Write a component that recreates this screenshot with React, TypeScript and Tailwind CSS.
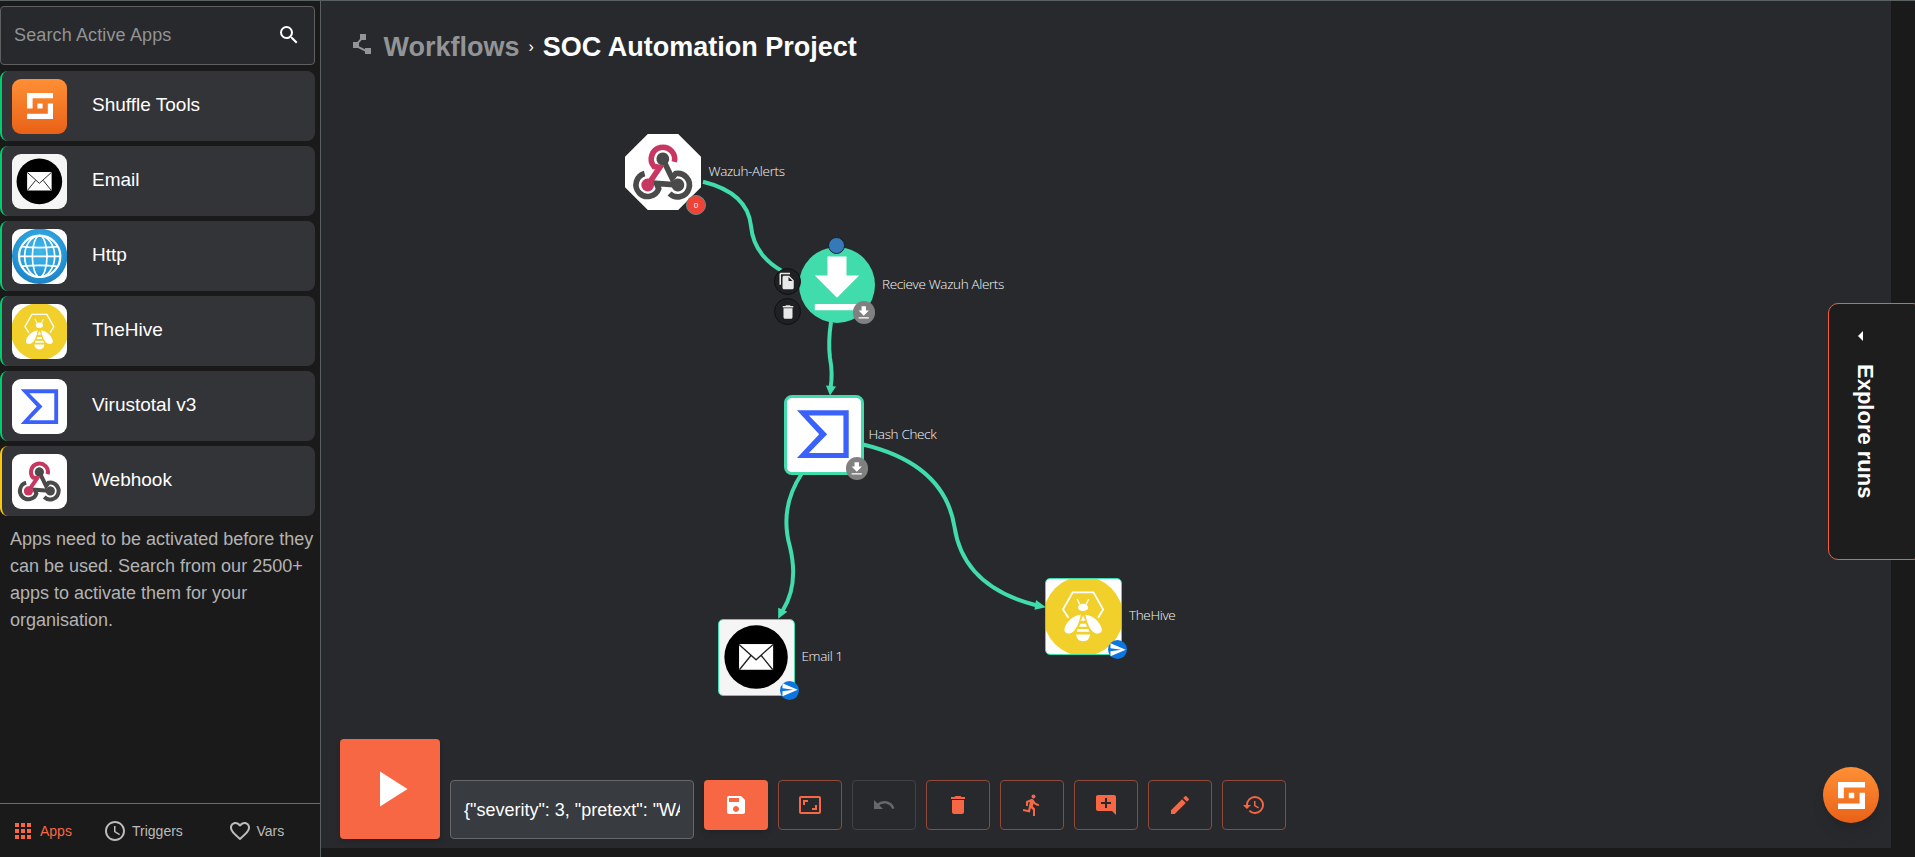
import type { ReactNode } from 'react';
import {
  MdAccessTime,
  MdAddComment,
  MdApps,
  MdArrowLeft,
  MdAspectRatio,
  MdDelete,
  MdDirectionsRun,
  MdEdit,
  MdFavoriteBorder,
  MdFileCopy,
  MdGetApp,
  MdHistory,
  MdPlayArrow,
  MdPolyline,
  MdSave,
  MdSearch,
  MdSend,
  MdUndo,
} from 'react-icons/md';

function ShuffleMark({ className }: { className?: string }) {
  return (
    <svg viewBox="0 0 5 5" className={className} fill="#fff" shapeRendering="geometricPrecision">
      <path d="M0 0H5V1H1.08V3H0zM2 2H3V3H2zM4 2H5V5H0V4H4z" />
    </svg>
  );
}

function ShuffleLogo() {
  return (
    <div className="flex size-full items-center justify-center bg-linear-to-b from-[#ff8f35] to-[#e96116]">
      <ShuffleMark className="size-[26px]" />
    </div>
  );
}

function EmailLogo() {
  return (
    <svg viewBox="0 0 229 229" className="size-full">
      <rect width="229" height="229" fill="#f5f5f5" />
      <circle cx="114" cy="114" r="95" fill="#000" />
      <rect x="63" y="75" width="102" height="77" fill="#fff" />
      <path d="M63 76l51 46 51-46M64 152l34-42M164 152l-34-42" fill="none" stroke="#222" strokeWidth="4" />
    </svg>
  );
}

function HttpLogo() {
  return (
    <svg viewBox="0 0 165 165" className="size-full">
      <defs>
        <radialGradient id="globe" cx="50%" cy="40%" r="60%">
          <stop offset="0" stopColor="#3fb8ea" />
          <stop offset="0.6" stopColor="#2ca0dc" />
          <stop offset="1" stopColor="#1c80c2" />
        </radialGradient>
      </defs>
      <rect width="165" height="165" fill="#fff" />
      <circle cx="83" cy="82" r="83" fill="url(#globe)" />
      <g fill="none" stroke="#fff" strokeWidth="5">
        <circle cx="83" cy="82" r="62" strokeWidth="6.500" />
        <ellipse cx="83" cy="82" rx="22" ry="62" />
        <ellipse cx="83" cy="82" rx="45" ry="62" />
        <path d="M21 82H145M29 53Q83 59 137 53M29 112Q83 106 137 112" />
      </g>
    </svg>
  );
}

function HiveLogo() {
  return (
    <svg viewBox="0 0 229 229" className="size-full">
      <rect width="229" height="229" fill="#fff" />
      <circle cx="114.500" cy="114.500" r="119" fill="#f1d02c" />
      <g fill="none" stroke="#fff" strokeWidth="5.500">
        <path d="M70 119L54 94 83 43H145L174 94 159 119" />
        <path d="M96 63l8 16M131 63l-8 16" strokeWidth="4" />
      </g>
      <g fill="#fff">
        <ellipse cx="114" cy="88" rx="15" ry="11" />
        <path d="M107 110C84 112 62 132 58 153C57 163 65 168 74 166C90 163 102 138 107 110z" />
        <path d="M121 110C144 112 166 132 170 153C171 163 163 168 154 166C138 163 126 138 121 110z" />
        <path d="M114 112l7 16H107zM106 137H122L126 146H102zM98 153H130L133 161H95zM93 169H135Q133 189 114 189Q95 189 93 169z" />
      </g>
    </svg>
  );
}

function VirusTotalLogo() {
  return (
    <svg viewBox="0 0 229 229" className="size-full">
      <rect width="229" height="229" fill="#fff" />
      <path
        fillRule="evenodd"
        fill="#3b61fb"
        d="M36 43H192V187H36L103 115zM72 59L127 115 72 172H176V59z"
      />
    </svg>
  );
}

function WebhookLogo() {
  const arm = (
    <>
      <path d="M49.300 27.900A11.700 11.700 0 1 0 29 32.500L34.800 33.300 23.500 50" fill="none" strokeWidth="5.600" />
      <circle cx="22.700" cy="51" r="6.400" stroke="none" />
    </>
  );
  return (
    <svg viewBox="0 0 76 76" className="size-full">
      <rect width="76" height="76" fill="#fff" />
      <g stroke="#4a4a4a" fill="#4a4a4a">
        <g transform="rotate(-120 37.800 42.300)">{arm}</g>
        <g transform="rotate(120 37.800 42.300)">{arm}</g>
      </g>
      <g stroke="#c83762" fill="#c83762">{arm}</g>
    </svg>
  );
}

const apps: { name: string; logo: ReactNode; trigger?: boolean }[] = [
  { name: 'Shuffle Tools', logo: <ShuffleLogo /> },
  { name: 'Email', logo: <EmailLogo /> },
  { name: 'Http', logo: <HttpLogo /> },
  { name: 'TheHive', logo: <HiveLogo /> },
  { name: 'Virustotal v3', logo: <VirusTotalLogo /> },
  { name: 'Webhook', logo: <WebhookLogo />, trigger: true },
];

function Sidebar() {
  return (
    <aside className="flex w-[321px] shrink-0 flex-col border-r border-[#5a5f62] pt-[5px]">
      <div className="flex h-[59px] w-[315px] items-center justify-between rounded-[4px] border border-[#5e5f61] bg-[#27292d] pr-[13px] pl-[13px]">
        <span className="text-[18px] tracking-[0.13px] text-[#929394]">Search Active Apps</span>
        <MdSearch className="mb-[2px] size-6 text-white" />
      </div>
      <div className="mt-[6px] flex w-[315px] flex-col gap-[5px]">
        {apps.map((app) => (
          <div
            key={app.name}
            className={`flex h-[70px] items-center rounded-[8px] border-l-2 bg-[#333438] pl-[10px] ${
              app.trigger ? 'border-[#fdc70c]' : 'border-[#02cb70]'
            }`}
          >
            <div className="size-[55px] overflow-hidden rounded-[9px]">{app.logo}</div>
            <span className="ml-[25px] pb-[2px] text-[19px] text-white">{app.name}</span>
          </div>
        ))}
      </div>
      <p className="mt-[10px] ml-[10px] w-[309px] text-[18px] leading-[27px] text-[#b3b3b3]">
        Apps need to be activated before they can be used. Search from our 2500+ apps to activate them for your
        organisation.
      </p>
      <div className="mt-auto flex h-[54px] items-center border-t border-[#6b6c6e] pl-[11px] text-sm text-[#bcbcbc]">
        <div className="flex w-[92px] items-center gap-[5px] text-[#f86743]">
          <MdApps className="size-6" />
          Apps
        </div>
        <div className="flex w-[124.500px] items-center gap-[5px]">
          <MdAccessTime className="size-6" />
          Triggers
        </div>
        <div className="flex items-center gap-[5px]">
          <MdFavoriteBorder className="size-6" />
          Vars
        </div>
      </div>
    </aside>
  );
}

function NodeLabel({ className, children }: { className: string; children: ReactNode }) {
  return (
    <span
      className={`absolute text-[13.5px] leading-[20px] font-light tracking-[-0.35px] whitespace-nowrap text-[#f6f6f6] [font-family:'Open_Sans','Noto_Sans',sans-serif] ${className}`}
    >
      {children}
    </span>
  );
}

function RoundBadge({ className, children }: { className: string; children?: ReactNode }) {
  return <div className={`absolute flex items-center justify-center rounded-full ${className}`}>{children}</div>;
}

function Graph() {
  return (
    <div className="absolute top-0 left-0 h-[720px] w-[1220px]">
      <svg viewBox="321 1 1220 720" className="absolute inset-0 size-full" fill="none">
        <g stroke="#41dcab" strokeWidth="4">
          <path d="M703 181.700Q747.700 192.700 751 226Q753.700 255 782 271" />
          <path d="M831 322Q828 342 830 358Q833 374 830.500 388" />
          <path d="M863 444.500Q944.500 464 954.500 527Q963.500 587 1037 605.500" />
          <path d="M801.500 474Q779 508 790 547Q799 585 782.500 611" />
        </g>
        <g fill="#41dcab">
          <path d="M825.900 385.500L836 386.500 830 395.500z" />
          <path d="M1036 600L1046 607.300 1034.500 609.700z" />
          <path d="M778.200 607.700L787.300 611.700 778.200 618.700z" />
        </g>
      </svg>

      <div className="absolute top-[133px] left-[304px] size-[76px] [clip-path:polygon(30%_0,70%_0,100%_30%,100%_70%,70%_100%,30%_100%,0_70%,0_30%)]">
        <WebhookLogo />
      </div>
      <RoundBadge className="top-[194px] left-[365px] size-[20px] border border-[#6d8a86] bg-[#ef4337] text-[8px] text-white [font-family:'Open_Sans',sans-serif]">
        0
      </RoundBadge>
      <NodeLabel className="top-[160px] left-[387.500px]">Wazuh-Alerts</NodeLabel>

      <RoundBadge className="top-[246px] left-[477.500px] size-[76px] bg-[#41dcab]">
        <MdGetApp className="size-[76px] text-white" />
      </RoundBadge>
      <RoundBadge className="top-[236px] left-[507px] size-[17px] border border-[#14202c] bg-[#3579b9]" />
      <RoundBadge className="top-[266.500px] left-[452.500px] size-[27px] border border-[#0e0f10] bg-[#1f2023]">
        <MdFileCopy className="size-[18px] text-[#e8e8e8]" />
      </RoundBadge>
      <RoundBadge className="top-[297px] left-[453px] size-[27px] border border-[#0e0f10] bg-[#1f2023]">
        <MdDelete className="size-[18px] text-[#e8e8e8]" />
      </RoundBadge>
      <RoundBadge className="top-[300px] left-[531.500px] size-[22.500px] bg-[#808080]">
        <MdGetApp className="size-[17.500px] text-white" />
      </RoundBadge>
      <NodeLabel className="top-[273px] left-[561px]">Recieve Wazuh Alerts</NodeLabel>

      <div className="absolute top-[394px] left-[463px] size-[79.500px] overflow-hidden rounded-[8px] border-[3.500px] border-[#41dcab] bg-white">
        <div className="-m-[2px] size-[76px]">
          <VirusTotalLogo />
        </div>
      </div>
      <RoundBadge className="top-[456px] left-[524.500px] size-[22.500px] bg-[#808080]">
        <MdGetApp className="size-[17.500px] text-white" />
      </RoundBadge>
      <NodeLabel className="top-[423px] left-[547.500px]">Hash Check</NodeLabel>

      <div className="absolute top-[618px] left-[397px] size-[76.500px] overflow-hidden rounded-[5px] border border-[#41dcab]">
        <div className="-m-px size-[76.500px]">
          <EmailLogo />
        </div>
      </div>
      <RoundBadge className="top-[679.500px] left-[459px] size-[19px] bg-[#0b76e0]">
        <MdSend className="size-[17.500px] text-white" />
      </RoundBadge>
      <NodeLabel className="top-[645px] left-[480.500px]">Email 1</NodeLabel>

      <div className="absolute top-[577px] left-[724.300px] size-[76.500px] overflow-hidden rounded-[5px] border border-[#41dcab]">
        <div className="-m-px size-[76.500px]">
          <HiveLogo />
        </div>
      </div>
      <RoundBadge className="top-[639px] left-[787px] size-[19px] bg-[#0b76e0]">
        <MdSend className="size-[17.500px] text-white" />
      </RoundBadge>
      <NodeLabel className="top-[604px] left-[808px]">TheHive</NodeLabel>
    </div>
  );
}

const tools: { icon: typeof MdEdit; disabled?: boolean }[] = [
  { icon: MdAspectRatio },
  { icon: MdUndo, disabled: true },
  { icon: MdDelete },
  { icon: MdDirectionsRun },
  { icon: MdAddComment },
  { icon: MdEdit },
  { icon: MdHistory },
];

function Toolbar() {
  return (
    <div className="relative flex h-[100px] items-start gap-[10px]">
      <button className="flex size-[100px] items-center justify-center rounded-[4px] bg-[#f86743] shadow-md">
        <MdPlayArrow className="size-[60px] text-white" />
      </button>
      <input
        readOnly
        value={'{"severity": 3, "pretext": "WAZUH Alert"}'}
        className="mt-[41px] h-[59px] w-[244px] rounded-[4px] border border-[#66686b] bg-[#383b40] px-[13px] pt-[2px] text-[18px] text-white outline-none"
      />
      <button className="mt-[41px] flex h-[50px] w-[64px] items-center justify-center rounded-[4px] bg-[#f86743] shadow-md">
        <MdSave className="size-6 text-white" />
      </button>
      {tools.map(({ icon: Icon, disabled }, i) => (
        <button
          key={i}
          className={`mt-[41px] flex h-[50px] w-[64px] items-center justify-center rounded-[4px] border ${
            disabled ? 'border-[#404246] text-[#67686b]' : 'border-[#904838] text-[#f86743]'
          }`}
        >
          <Icon className="size-6" />
        </button>
      ))}
    </div>
  );
}

export default function App() {
  return (
    <div className="relative flex h-[857px] w-[1915px] overflow-hidden border-t border-[#5a6163] bg-[#1a1a1a] [font-family:'Liberation_Sans',Arial,sans-serif]">
      <Sidebar />
      <main className="flex h-[847px] w-[1570px] flex-col justify-between bg-[#27292d] pb-[9px] pl-[19px]">
        <header className="relative z-10 flex items-center pt-[31px] pl-[10px] text-[27px] leading-[30px] font-bold">
          <MdPolyline className="mb-[6px] size-6 text-[#939496]" />
          <span className="ml-[9.500px] text-[#939496]">Workflows</span>
          <span className="mx-[9px] text-base font-normal text-white">›</span>
          <span className="text-white">SOC Automation Project</span>
        </header>
        <Toolbar />
      </main>
      <div className="absolute top-0 left-[321px]">
        <Graph />
      </div>
      <div className="absolute top-[302px] left-[1828px] flex h-[257px] w-[95px] flex-col items-start rounded-[10px] border border-[#f85a3e] bg-[#1d1d1d] pt-[20px] pl-[20px] text-white">
        <MdArrowLeft className="size-6" />
        <span className="mt-[16px] ml-[2px] text-[22px] leading-[28px] font-bold whitespace-nowrap [writing-mode:vertical-rl]">
          Explore runs
        </span>
      </div>
      <button className="absolute top-[766px] left-[1823px] flex size-[56px] items-center justify-center rounded-full bg-linear-to-b from-[#ff8f35] to-[#e96116] shadow-lg">
        <ShuffleMark className="size-[27px]" />
      </button>
    </div>
  );
}
